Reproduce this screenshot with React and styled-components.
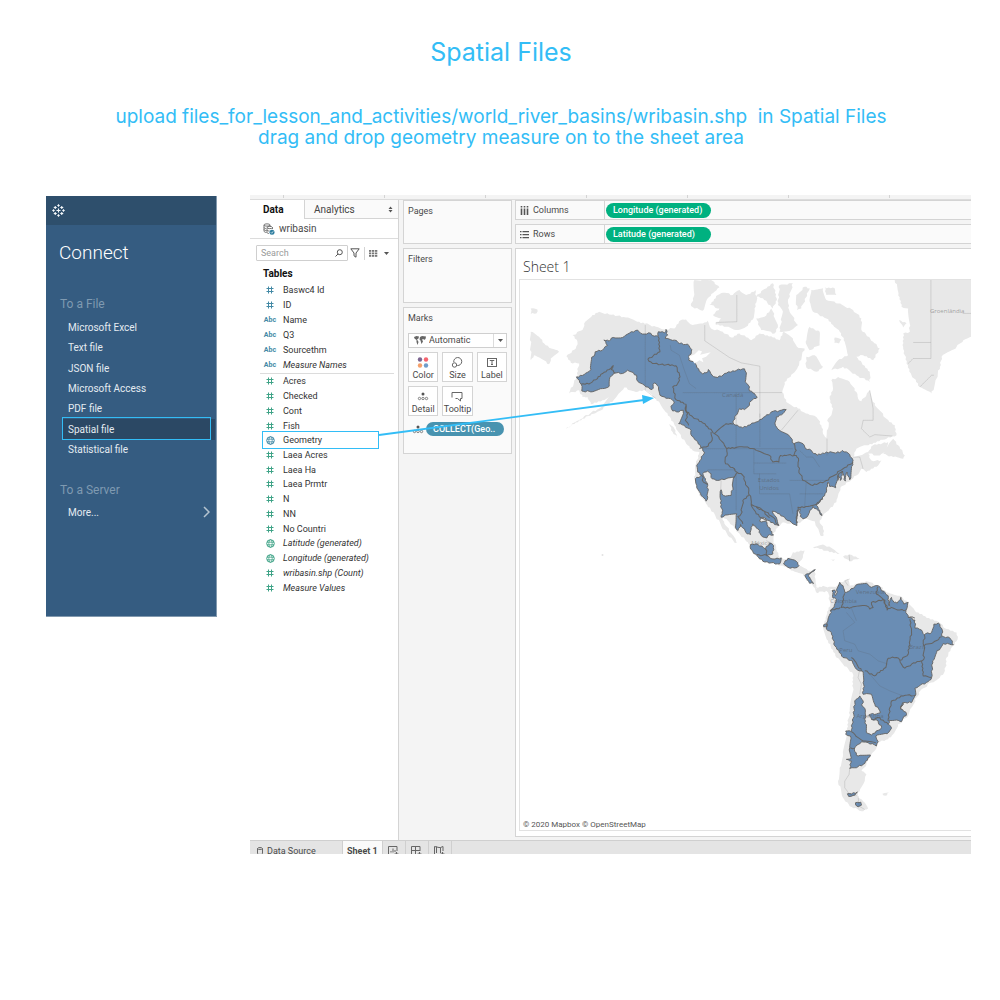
import React from "react";
import styled, { createGlobalStyle } from "styled-components";

const GlobalStyle = createGlobalStyle`
  * { box-sizing: border-box; }
  body { margin: 0; background: #fff; }
  h1, h2, h3, p, ul { margin: 0; padding: 0; }
  ul { list-style: none; }
  button, input, select { font: inherit; color: inherit; margin: 0; padding: 0; border: 0; background: none; border-radius: 0; }
  button { cursor: pointer; }
`;

/* ---------- lesson page ---------- */

const Page = styled.main`
  padding: 36px 29px 40px 46px;
  font-family: Roboto, "Liberation Sans", sans-serif;
`;
const Intro = styled.header`
  display: flex;
  flex-direction: column;
  gap: 38px;
  padding-right: 15px;
  text-align: center;
  font-family: Inter, "Open Sans", sans-serif;
  color: #33bdf6;
`;
const Title = styled.h1`
  font-size: 25px;
  line-height: 32px;
  font-weight: 400;
`;
const Steps = styled.p`
  font-size: 19px;
  line-height: 21px;
  white-space: pre-wrap;
`;
const Board = styled.div`
  display: flex;
  align-items: flex-start;
  gap: 33px;
  margin-top: 47px;
`;

/* ---------- connect panel ---------- */

const Connect = styled.nav`
  flex: 0 0 171px;
  min-height: 421px;
  background: #355c81;
  color: #e4ebf1;
  border-right: 1px solid #8299ae;
  border-bottom: 1px solid #8299ae;
  margin-top: 1px;
`;
const ConnectBar = styled.div`
  height: 29px;
  display: flex;
  align-items: center;
  padding-left: 6px;
  background: #2e4f6c;
`;
const ConnectTitle = styled.h2`
  padding: 16px 13px 0;
  font-size: 19px;
  line-height: 24px;
  font-weight: 300;
  color: #fff;
`;
const GroupTitle = styled.h3`
  padding: ${(p) => p.$space}px 14px 0;
  font-size: 12px;
  line-height: 16px;
  font-weight: 400;
  color: #7f9ab1;
`;
const FileList = styled.ul`
  display: grid;
  grid-auto-rows: 1fr;
  height: ${(p) => p.$height}px;
  margin-top: 5px;
  padding: 0 1px 0 17px;
`;
const FileItem = styled.li`
  position: relative;
  display: flex;
  background: ${(p) => (p.$on ? "#2b4864" : "none")};
`;
const FileLink = styled.a`
  flex: 1;
  display: flex;
  align-items: center;
  justify-content: space-between;
  padding: 0 5px;
  font-size: 10px;
  color: #e4ebf1;
  text-decoration: none;
`;
const Marker = styled.span`
  position: absolute;
  inset: -2px 4px 0 -1px;
  border: 1px solid #33bdf6;
  pointer-events: none;
`;

/* ---------- workbook ---------- */

const Workbook = styled.section`
  position: relative;
  flex: 1;
  min-width: 0;
  background: #f4f4f4;
  color: #4a4a4a;
  font-size: 9px;
`;
const Ticks = styled.div`
  display: flex;
  height: 4px;
  padding-left: 33px;
  gap: 100px;
`;
const Tick = styled.i`
  width: 1px;
  height: 3px;
  background: #d4d4d4;
`;
const Columns = styled.div`
  display: flex;
  min-height: 641px;
  border-top: 1px solid #dcdcdc;
`;
const DataPane = styled.aside`
  flex: 0 0 149px;
  min-width: 0;
  background: #fff;
  border-right: 1px solid #d4d4d4;
`;
const PaneTabs = styled.div`
  display: flex;
  height: 19px;
`;
const PaneTab = styled.button`
  flex: ${(p) => (p.$on ? "0 0 54px" : "1")};
  display: flex;
  align-items: center;
  justify-content: space-between;
  padding: 0 5px 0 ${(p) => (p.$on ? 13 : 9)}px;
  font-size: 10px;
  font-weight: ${(p) => (p.$on ? 700 : 400)};
  color: ${(p) => (p.$on ? "#111" : "#444")};
  ${(p) => !p.$on && "background:#fafafa; border-left:1px solid #d4d4d4; border-bottom:1px solid #d4d4d4;"}
`;
const Source = styled.div`
  display: flex;
  align-items: center;
  gap: 4px;
  height: 20px;
  padding-left: 13px;
  border-bottom: 1px solid #dcdcdc;
  font-size: 10px;
`;
const Tools = styled.div`
  display: flex;
  align-items: center;
  height: 16px;
  margin: 6px 8px 0 6px;
`;
const SearchBox = styled.label`
  flex: 0 0 92px;
  min-width: 0;
  display: flex;
  align-items: center;
  height: 16px;
  padding: 0 4px;
  border: 1px solid #cfcfcf;
  border-radius: 1px;
  margin-right: 2px;
`;
const SearchInput = styled.input`
  flex: 1;
  width: 100%;
  min-width: 0;
  outline: 0;
  &::placeholder { color: #9a9a9a; }
`;
const ToolButton = styled.button`
  display: flex;
  align-items: center;
  height: 14px;
  margin-right: ${(p) => p.$after}px;
`;
const Rule = styled.span`
  width: 1px;
  height: 13px;
  margin-right: 4px;
  background: #d4d4d4;
`;
const TablesTitle = styled.h3`
  padding: 5px 13px 0;
  font-size: 10px;
  line-height: 16px;
  color: #111;
`;
const Fields = styled.ul`
  display: grid;
  grid-auto-rows: 1fr;
  height: ${(p) => p.$height}px;
  margin: 0 4px 0 10px;
  & + & { border-top: 1px solid #dcdcdc; }
`;
const Field = styled.li`
  position: relative;
  display: grid;
  grid-template-columns: 20px 1fr;
  align-items: center;
  column-gap: 3px;
  font-style: ${(p) => (p.$italic ? "italic" : "normal")};
  color: #333;
  line-height: 12px;
`;
const FieldIcon = styled.span`
  display: flex;
  justify-content: center;
  font-size: 7px;
  font-weight: 700;
  font-style: normal;
  color: #4389a5;
`;
const FieldMarker = styled.span`
  position: absolute;
  inset: -2px 15px -1px 2px;
  border: 1px solid #33bdf6;
  pointer-events: none;
`;

const Cards = styled.div`
  flex: 0 0 117px;
  display: flex;
  flex-direction: column;
  gap: 4px;
  padding: 0 4px;
  margin-right: -1px;
`;
const Card = styled.section`
  min-height: ${(p) => p.$height}px;
  padding: 4px;
  background: #fafafa;
  border: 1px solid #d4d4d4;
`;
const CardTitle = styled.h3`
  font-size: 9px;
  line-height: 13px;
  font-weight: 400;
`;
const MarkType = styled.label`
  position: relative;
  display: flex;
  align-items: center;
  height: 15px;
  margin: 8px 0 4px;
  padding-left: 5px;
  background: #fff;
  border: 1px solid #cfcfcf;
`;
const MarkSelect = styled.select`
  appearance: none;
  flex: 1;
  min-width: 0;
  height: 13px;
  padding-left: 3px;
  line-height: 13px;
  outline: 0;
`;
const Chevron = styled.span`
  display: flex;
  align-items: center;
  justify-content: center;
  width: 13px;
  height: 13px;
  border-left: 1px solid #dcdcdc;
`;
const MarkGrid = styled.div`
  display: grid;
  grid-template-columns: repeat(3, 1fr);
  grid-auto-rows: 30px;
  gap: 4px;
`;
const MarkButton = styled.button`
  display: flex;
  flex-direction: column;
  align-items: center;
  justify-content: space-between;
  padding: 4px 0 0;
  background: #fff;
  border: 1px solid #d4d4d4;
  line-height: 11px;
`;
const PillRow = styled.div`
  display: flex;
  align-items: center;
  gap: 2px;
  padding: 6px 3px 0 4px;
`;
const Pill = styled.button`
  height: ${(p) => (p.$small ? 14 : 15)}px;
  width: ${(p) => (p.$small ? 78 : 105)}px;
  padding: 0 7px;
  border-radius: 8px;
  background: ${(p) => (p.$small ? "#4893b0" : "#00b180")};
  color: #fff;
  font-size: 9px;
  font-weight: 500;
  text-align: left;
  white-space: nowrap;
`;

const Sheet = styled.div`
  flex: 1;
  min-width: 0;
  display: flex;
  flex-direction: column;
  gap: 4px;
  padding-bottom: 3px;
`;
const Shelf = styled.div`
  display: flex;
  align-items: center;
  height: 20px;
  background: #fafafa;
  border: 1px solid #d4d4d4;
  border-right: 0;
`;
const ShelfName = styled.div`
  flex: 0 0 89px;
  display: flex;
  align-items: center;
  gap: 4px;
  height: 18px;
  padding-left: 4px;
  margin-right: 1px;
  border-right: 1px solid #d4d4d4;
`;
const View = styled.section`
  flex: 1;
  display: flex;
  flex-direction: column;
  padding: 6px 0 4px 3px;
  background: #fff;
  border: 1px solid #d4d4d4;
  border-right: 0;
`;
const ViewTitle = styled.h2`
  padding: 0 4px;
  font-family: "Open Sans", sans-serif;
  font-size: 14px;
  line-height: 24px;
  font-weight: 300;
  color: #333;
`;
const MapFrame = styled.figure`
  position: relative;
  display: flex;
  height: 552px;
  margin: 0;
  overflow: hidden;
  border: 1px solid #e2e2e2;
  border-right: 0;
`;
const Credit = styled.figcaption`
  position: absolute;
  left: 3px;
  bottom: 0;
  font-size: 8px;
  line-height: 11px;
  color: #555;
`;
const SheetTabs = styled.footer`
  display: flex;
  height: 14px;
  overflow: hidden;
  background: #e4e4e4;
  border-top: 1px solid #cfcfcf;
`;
const SheetTab = styled.button`
  flex: 0 0 ${(p) => p.$width}px;
  display: flex;
  align-items: center;
  gap: 4px;
  height: 20px;
  padding-left: ${(p) => p.$pad}px;
  border-right: 1px solid #cfcfcf;
  background: ${(p) => (p.$on ? "#fafafa" : "none")};
  font-weight: ${(p) => (p.$on ? 700 : 400)};
  white-space: nowrap;
`;
const Arrow = styled.svg`
  position: absolute;
  left: 128px;
  top: 196px;
  pointer-events: none;
`;

/* ---------- icons ---------- */

const plus = (x, y, r) => `M${x - r} ${y}H${x + r}M${x} ${y - r}V${y + r}`;
const Logo = () => (
  <svg width="13" height="13" viewBox="0 0 26 26" stroke="#f4f8fb" strokeWidth="2.200" fill="none" aria-hidden="true">
    <path d={[[13, 13, 4], [13, 3, 2.4], [13, 23, 2.4], [3, 13, 2.4], [23, 13, 2.4], [6.5, 7, 3], [19.5, 7, 3], [6.5, 19, 3], [19.5, 19, 3]].map((a) => plus(...a)).join("")} />
  </svg>
);
const Hash = ({ color }) => (
  <svg width="8" height="8" viewBox="0 0 8 8" stroke={color} fill="none" aria-hidden="true">
    <path d="M2.5 .5V7.5M5.5 .5V7.5M.5 2.5H7.5M.5 5.5H7.5" />
  </svg>
);
const Globe = ({ color }) => (
  <svg width="9" height="9" viewBox="0 0 9 9" stroke={color} fill="none" aria-hidden="true">
    <circle cx="4.5" cy="4.5" r="3.8" />
    <ellipse cx="4.5" cy="4.5" rx="1.7" ry="3.8" strokeWidth=".8" />
    <path d="M1 3.2H8M1 5.8H8" strokeWidth=".8" />
  </svg>
);
const Down = () => (
  <svg width="5" height="3" viewBox="0 0 5 3" aria-hidden="true"><path d="M0 0H5L2.5 3Z" fill="#555" /></svg>
);
const SourceIcon = () => (
  <svg width="12" height="12" viewBox="0 0 24 24" fill="none" stroke="#666" strokeWidth="1.8" aria-hidden="true">
    <path d="M2 4C2 1 14 1 14 4V7M2 4C2 7 14 7 14 4M2 4V16C2 18 5 19 7 19M2 9C2 10 4 11 6 11M2 13C3 15 5 15 7 15M8 9C8 6 19 6 19 9C19 12 8 12 8 9V19C8 20 10 21 12 21M19 9V12M8 14C9 16 11 16 13 16" />
    <circle cx="18" cy="18.500" r="5" fill="#2d7d9f" stroke="none" />
    <path d="M15.500 18.500L17.500 20.500L20.500 16.500" stroke="#fff" strokeWidth="1.300" />
  </svg>
);
const Magnifier = () => (
  <svg width="8" height="8" viewBox="0 0 8 8" fill="none" stroke="#555" aria-hidden="true">
    <circle cx="4.800" cy="3.200" r="2.500" /><path d="M3 5L.5 7.500" />
  </svg>
);
const Funnel = () => (
  <svg width="10" height="10" viewBox="0 0 10 10" fill="none" stroke="#555" aria-hidden="true">
    <path d="M.8 .8H9.200L6 5V9.200L4 7.800V5Z" />
  </svg>
);
const GridIcon = () => (
  <svg width="9" height="7" viewBox="0 0 9 7" fill="#777" aria-hidden="true">
    {[0, 3, 6].map((x) => [0, 2.5, 5].map((y) => <rect key={`${x}${y}`} x={x} y={y} width="2.300" height="1.800" />))}
  </svg>
);
const Sorter = () => (
  <svg width="5" height="7" viewBox="0 0 5 7" fill="#555" aria-hidden="true"><path d="M0.500 3L2.500 .5L4.500 3ZM0.500 4L2.500 6.500L4.500 4Z" /></svg>
);
const WorldIcon = () => (
  <svg width="12" height="9" viewBox="0 0 24 18" fill="#666" aria-hidden="true">
    <path d="M0 2L5 0L10 1L9 5L6 7L8 10L9 12L7 18L5 12L5 8L1 5ZM12 2L16 0L24 1L23 6L20 8L19 6L16 7L18 11L15 16L13 9L11 7Z" />
  </svg>
);
const Ring = ({ x, y }) => <circle cx={x} cy={y} r="1.200" fill="none" stroke="#666" strokeWidth=".8" />;
const markIcons = {
  Color: (
    <svg width="12" height="11" viewBox="0 0 12 11" aria-hidden="true">
      <circle cx="3" cy="2.500" r="2.200" fill="#7c6591" /><circle cx="9" cy="2.500" r="2.200" fill="#f5646f" />
      <circle cx="3" cy="8.500" r="2.200" fill="#f5a06b" /><circle cx="9" cy="8.500" r="2.200" fill="#6f9dcb" />
    </svg>
  ),
  Size: (
    <svg width="12" height="11" viewBox="0 0 12 11" fill="none" stroke="#666" aria-hidden="true">
      <path d="M2.800 5.200A4 4 0 1 1 6.300 8.500" /><circle cx="3.500" cy="8" r="2.200" />
    </svg>
  ),
  Label: (
    <svg width="12" height="11" viewBox="0 0 12 11" fill="none" stroke="#666" aria-hidden="true">
      <rect x="1.500" y="1.500" width="9" height="8" /><path d="M4 4V3.500H8V4M6 3.500V7.500M5 7.500H7" />
    </svg>
  ),
  Detail: (
    <svg width="12" height="11" viewBox="0 0 12 11" aria-hidden="true">
      <circle cx="6" cy="3" r="1.500" fill="#555" /><Ring x={2.5} y={7.5} /><Ring x={6} y={7.5} /><Ring x={9.5} y={7.5} />
    </svg>
  ),
  Tooltip: (
    <svg width="12" height="11" viewBox="0 0 12 11" fill="none" stroke="#666" aria-hidden="true">
      <path d="M1 6.500V1.500H11V7.500H9.500V10L6.500 7.500H4.500" />
    </svg>
  ),
};
const ColumnsIcon = () => (
  <svg width="9" height="9" viewBox="0 0 9 9" fill="#555" aria-hidden="true">
    {[0, 3, 6].map((x) => <path key={x} d={`M${x + 0.7} 0h1.600v1.500h-1.600zM${x + 0.7} 2.500h1.600v6.500h-1.600z`} />)}
  </svg>
);
const RowsIcon = () => (
  <svg width="9" height="9" viewBox="0 0 9 9" fill="#555" aria-hidden="true">
    {[1, 4, 7].map((y) => <path key={y} d={`M0 ${y}h1.500v1.300h-1.500zM2.500 ${y}h6.500v1.300h-6.500z`} />)}
  </svg>
);
const Cylinder = () => (
  <svg width="6" height="8" viewBox="0 0 6 8" fill="none" stroke="#666" aria-hidden="true">
    <path d="M.5 1.500V6.500C.5 7.800 5.500 7.800 5.500 6.500V1.500C5.500 .2 .5 .2 .5 1.500C.5 2.800 5.500 2.800 5.500 1.500" />
  </svg>
);
const newSheetPaths = [
  "M9 5V.5H.5V8.500H6M3 6.500V5M5 6.500V2.500M7 6V4",
  "M9 5V.5H.5V8.500H6M4.500 .5V8.500M.5 4.500H9",
  "M9 5V.5L6.500 1.500H5L.5 .5V8.500H2M2.500 .5V7M6.500 1.500V7",
];
const NewSheet = ({ d }) => (
  <svg width="11" height="10" viewBox="0 0 11 10" fill="none" stroke="#666" aria-hidden="true">
    <path d={d} /><path d="M6.500 8H10.500M8.500 6V10" strokeWidth="1.200" />
  </svg>
);

/* ---------- map ---------- */

// Turns a coarse trace into a coast-like outline: long edges are split and
// each new vertex is nudged sideways by a repeatable wobble.
function trace(text, closed = true, wobble = 2.6) {
  const pts = text.trim().split(/\s+/).map((p) => p.split(",").map(Number));
  const out = [];
  const last = closed ? pts.length : pts.length - 1;
  for (let i = 0; i < last; i++) {
    const [x1, y1] = pts[i];
    const [x2, y2] = pts[(i + 1) % pts.length];
    const len = Math.hypot(x2 - x1, y2 - y1);
    const n = Math.max(1, Math.round(len / 6));
    out.push(`${x1} ${y1}`);
    for (let k = 1; k < n; k++) {
      const s = Math.sin(x1 * 12.9 + y1 * 78.2 + k * 37.7) * 43758.5;
      const w = (s - Math.floor(s) - 0.5) * 2 * wobble;
      const t = k / n;
      out.push(`${(x1 + (x2 - x1) * t - ((y2 - y1) / len) * w).toFixed(1)} ${(y1 + (y2 - y1) * t + ((x2 - x1) / len) * w).toFixed(1)}`);
    }
  }
  if (!closed) out.push(pts[pts.length - 1].join(" "));
  return `M${out.join("L")}${closed ? "Z" : ""}`;
}

const north = {
  land: [
    "40,165 70,150 75,130 100,105 120,95 150,103 200,112 240,125 290,140 315,148 345,145 365,120 380,118 400,135 430,130 445,122 455,145 490,155 515,172 540,160 575,180 600,160 640,172 660,180 672,155 700,175 712,200 735,205 715,260 700,280 675,305 668,335 680,365 715,385 745,400 770,410 785,435 790,460 800,473 805,445 805,415 815,405 820,385 810,355 820,325 815,300 835,290 870,305 890,335 895,355 905,363 920,345 930,330 945,375 980,415 1005,435 1010,465 980,475 920,495 890,505 880,530 900,525 925,515 940,495 985,485 975,515 960,525 925,520 935,540 965,540 955,555 920,575 905,565 890,585 875,598 842,622 835,645 830,665 810,685 790,705 780,720 790,745 792,765 782,765 772,740 765,722 740,715 710,730 690,730 670,725 657,738 640,760 642,780 650,805 660,830 685,838 700,815 735,810 730,830 715,850 745,870 765,868 768,900 770,920 790,925 815,918 845,925 815,925 795,935 775,930 760,915 740,900 730,880 700,870 670,855 640,848 600,835 580,810 565,785 535,755 510,725 485,705 495,730 525,770 535,792 510,770 485,735 465,700 440,670 420,645 405,595 410,550 420,515 400,510 385,495 365,470 350,440 335,415 315,390 290,355 260,330 230,335 195,322 175,345 150,372 110,398 70,415 20,445 75,408 120,385 150,350 130,360 95,372 85,350 70,350 60,330 30,340 52,290 60,250 35,248 22,228 50,205 55,185",
    "-85,155 -60,170 -40,195 0,215 -25,235 -30,252 -65,230 -75,225 -85,240",
    "-85,85 -65,88 -68,100 -85,102",
    "405,0 455,0 480,22 465,35 445,55 430,92 395,78 403,50",
    "450,75 475,45 490,38 520,45 540,30 560,45 588,30 592,60 585,85 580,118 560,140 530,150 500,140 470,133 485,115 460,105 480,85",
    "610,30 640,10 652,60 640,85 610,55 590,50",
    "590,115 615,110 635,85 655,135 645,160 605,150",
    "660,15 700,10 685,65 690,95 715,135 695,150 660,155 670,95 655,75",
    "710,45 735,20 750,25 725,85 712,90",
    "755,30 790,25 800,60 835,70 880,90 905,115 905,150 940,185 960,205 940,240 910,225 890,230 930,275 930,305 890,285 850,260 815,270 835,240 865,225 855,185 840,155 820,135 800,115 760,95 750,65",
    "795,22 825,25 830,45 800,45",
    "750,140 780,155 780,195 750,210 738,185",
    "740,230 765,225 790,260 770,275 740,262",
    "825,172 845,178 838,190 824,188",
    "1005,-3 1240,-3 1240,170 1210,180 1190,200 1145,230 1140,260 1130,295 1115,340 1080,320 1055,285 1040,250 1030,200 1030,160 1050,155 1045,85 1025,80 1015,35",
    "1018,120 1040,130 1030,142",
    "970,520 985,495 1000,475 1015,495 1035,525 1030,535 1000,530",
    "760,800 790,792 820,805 840,818 810,815 775,802",
    "850,828 870,822 900,834 870,842",
    "812,835 826,837 820,841",
    "330,430 345,445 355,475 340,455",
  ],
  basins: [
    "52,290 75,283 95,268 97,238 108,215 130,210 145,196 134,180 150,183 162,172 190,172 205,162 235,150 250,162 268,158 285,168 297,168 297,155 315,158 320,148 325,165 318,175 345,180 360,190 385,192 397,208 395,222 388,228 388,240 408,243 412,262 430,282 440,278 447,268 458,285 475,292 495,280 520,272 555,266 560,285 557,305 570,320 570,332 585,340 593,350 575,362 565,380 555,388 540,385 530,405 520,425 523,432 550,443 565,435 590,425 618,408 635,395 660,391 680,388 670,400 650,410 646,428 660,450 690,468 703,490 717,485 730,490 738,505 755,510 772,525 800,515 840,517 848,510 865,518 880,540 875,565 870,598 862,575 857,602 848,572 842,600 835,585 828,622 810,618 805,605 800,635 780,665 768,672 775,680 787,705 770,685 760,678 750,690 745,705 730,715 722,708 722,685 712,700 710,720 712,735 700,730 685,720 675,710 650,695 638,692 650,710 658,735 645,732 630,720 610,710 600,722 622,725 632,750 642,763 625,765 622,772 605,765 595,745 580,730 575,740 573,762 563,760 555,745 543,732 535,750 530,745 532,700 510,702 485,710 488,695 482,650 485,628 492,645 515,645 520,620 523,590 500,595 475,600 458,595 455,580 445,572 430,580 438,595 445,615 445,650 440,662 425,645 412,615 408,595 428,585 415,575 412,555 422,540 435,515 430,505 410,480 398,468 395,450 375,435 358,430 370,405 372,390 358,395 340,392 335,378 345,365 333,355 315,350 302,345 298,320 285,308 278,328 255,315 235,303 232,285 205,270 190,280 165,278 152,292 150,318 130,325 95,335 68,332 66,312",
    "573,792 595,792 618,805 630,788 642,795 640,820 622,825 640,835 665,832 660,850 610,842 592,825 573,805",
    "672,850 685,833 710,842 718,855 705,862 685,860",
    "740,880 767,867 745,885 762,908 750,908 736,885",
  ],
  divides: [
    "66,312 95,308 115,295 130,280 150,268 162,256 156,268 168,280",
    "297,170 302,215 266,237 280,250 350,257 362,290 355,310 340,320 350,358 380,372 383,395 400,410 430,428 445,440 465,460 500,430 520,432",
    "380,372 378,390 385,400 378,420 388,435",
    "465,460 478,470 495,495 502,512 498,550 525,565 532,575 550,585 555,600 568,630 575,670 605,685 640,710 655,732",
    "455,455 458,480 440,500 420,505",
    "502,505 535,500 565,500 590,510 615,520 630,525 640,545 658,545 663,525 680,525 710,525 717,540 718,570 730,600 760,615 800,600 850,565 880,545",
    "703,490 710,510 702,525",
    "568,645 550,660 545,700 535,708 550,730",
    "575,670 590,700 622,722",
    "590,680 610,690 630,712",
    "710,728 715,680 745,678 770,672 790,655",
    "523,592 535,575",
    "428,585 432,605 445,612",
    "592,822 622,825 618,805",
    "835,600 835,585 850,572",
  ],
  borders: [
    "258,135 258,330 290,355", "436,135 436,182 510,232 545,248 601,258 601,412", "470,133 470,127 532,125 532,45",
    "370,337 667,337", "530,337 530,505", "601,400 601,500", "430,505 700,505", "665,450 715,390", "802,475 802,525",
    "930,330 940,385 940,420 910,420 905,445 930,470 945,463 998,467",
    "1113,-3 1113,235 1060,235 1045,250", "1060,187 1113,187", "1080,320 1115,285 1122,285", "1208,100 1240,100",
    "333,195 335,210 360,225 375,270 390,310 410,325", "445,568 530,568", "583,505 583,580 650,580", "583,548 680,548",
    "600,580 600,640 690,640", "690,640 700,700", "530,575 530,690", "720,640 790,640", "690,600 800,600", "740,600 735,680",
    "880,530 900,530 910,565", "868,822 870,842", "620,780 640,790", "483,645 485,600", "720,510 740,530 760,530 780,560",
  ],
};
const south = {
  land: [
    "40,75 50,85 70,75 95,90 120,65 145,55 150,75 200,62 235,75 260,95 300,105 325,125 345,150 370,165 410,180 440,205 470,215 473,235 455,260 440,290 435,330 420,350 395,365 365,385 350,410 335,440 320,470 295,490 280,520 265,535 235,545 230,562 215,580 200,610 185,630 200,640 195,660 180,690 170,705 190,720 205,742 185,750 150,735 130,710 115,660 120,620 130,580 140,520 150,450 160,380 160,340 110,290 85,240 70,195 80,165 92,130 85,95 70,85 52,98",
    "248,698 268,693 262,702 250,702",
    "238,74 250,82 246,90 236,82",
  ],
  basins: [
    "92,150 103,140 110,115 100,112 97,90 105,88 107,105 120,65 130,75 135,95 150,90 170,72 200,68 215,80 235,75 243,85 255,95 265,105 268,135 275,110 283,125 292,128 303,110 312,130 325,125 322,140 318,150 325,170 345,178 345,202 365,208 373,222 395,215 402,190 415,187 427,208 425,225 450,232 460,252 430,248 410,275 398,300 395,350 385,362 345,382 348,400 340,415 335,425 310,425 303,445 320,458 305,482 295,478 268,478 265,490 275,502 262,518 228,525 235,542 230,555 205,545 185,542 168,556 165,572 175,585 212,582 190,610 170,620 150,622 155,600 140,595 155,592 150,560 152,525 138,520 138,510 155,512 162,460 165,420 180,405 190,420 187,435 197,450 197,480 200,515 215,522 245,500 235,480 215,475 207,462 242,455 225,430 215,400 200,398 190,400 192,360 190,332 180,330 170,325 158,300 130,290 105,255 95,215 80,205 85,175 95,155",
    "143,698 173,693 160,703 147,706", "167,725 183,723 185,732 175,737 168,732", "72,192 82,190 82,198 72,198",
  ],
  divides: [
    "135,98 125,140 155,140 200,135 210,145 220,140 215,125 255,118 262,148 275,140 300,148 318,148",
    "92,150 122,140", "235,78 230,100 250,115 262,148",
    "330,175 335,210 330,240 325,280 300,298 290,290 265,292 258,320 225,345 195,330",
    "300,298 315,322 335,310 365,300 370,345 395,350", "373,222 372,255 372,295 367,300", "372,255 400,245 425,228",
    "155,290 165,300 185,330", "348,402 310,405 275,420 270,440 265,480", "303,445 308,425",
    "155,512 165,520 190,540 228,545", "215,475 240,470 265,490", "152,560 165,562", "325,170 345,172",
  ],
  borders: [
    "180,325 175,350 185,370 180,400", "150,622 148,640 135,660 135,680 150,700 175,705 178,735 195,745",
    "140,155 165,185 130,210 135,240 165,250 175,270", "175,270 210,280 235,300 265,310", "210,340 240,375 270,390 310,405",
    "145,75 135,60 150,55", "255,118 275,140", "155,142 170,180",
  ],
};
const mapLabels = [
  ["Groenlândia", 1227, 100], ["Canadá", 605, 350], ["Estados", 712, 606], ["Unidos", 716, 628], ["México", 692, 793],
];
const southLabels = [["Venezuela", 168, 100], ["Colombia", 92, 128], ["Peru", 119, 274], ["Brazil", 328, 266], ["Argentina", 170, 470]];

const Continent = ({ data, x, y }) => (
  <g transform={`translate(${x} ${y})`}>
    <path d={data.land.map((s) => trace(s)).join("")} fill="#e8e8e8" />
    <path d={data.basins.map((s) => trace(s)).join("")} fill="#6a8db4" stroke="#656565" strokeWidth="2.800" strokeLinejoin="round" />
    <path d={data.borders.map((s) => trace(s, false, 0)).join("")} fill="none" stroke="#555" strokeOpacity=".22" strokeWidth="2.400" />
    <path d={data.divides.map((s) => trace(s, false)).join("")} fill="none" stroke="#656565" strokeWidth="3" strokeLinejoin="round" />
  </g>
);
const WorldMap = () => (
  <svg width="100%" height="551" viewBox="0 0 1350 1653" preserveAspectRatio="xMinYMin slice" role="img" aria-label="River basins of the Americas">
    <Continent data={north} x={117} y={0} />
    <path d="M505 230l18 -8 12 -12 10 4 -6 10 32 -8 -14 14 -12 4 4 12 -12 -6 -14 10 -6 -8 -6 -4z" fill="#fff" />
    <Continent data={south} x={837} y={840} />
    <g fontSize="18" fill="#555" fillOpacity=".5" fontFamily="Open Sans, sans-serif">
      {mapLabels.map(([t, x, y]) => <text key={t} x={x} y={y}>{t}</text>)}
      {southLabels.map(([t, x, y]) => <text key={t} x={x + 837} y={y + 840}>{t}</text>)}
    </g>
    <circle cx="247" cy="823" r="3" fill="#e2e2e2" />
  </svg>
);

/* ---------- content ---------- */

const files = ["Microsoft Excel", "Text file", "JSON file", "Microsoft Access", "PDF file", "Spatial file", "Statistical file"];
const BLUE = "#4389a5";
const GREEN = "#3fa387";
const dimensions = [["Baswc4 Id", "#"], ["ID", "#"], ["Name", "Abc"], ["Q3", "Abc"], ["Sourcethm", "Abc"], ["Measure Names", "Abc", true]];
const measures = [
  ["Acres", "#"], ["Checked", "#"], ["Cont", "#"], ["Fish", "#"], ["Geometry", "geo"], ["Laea Acres", "#"], ["Laea Ha", "#"],
  ["Laea Prmtr", "#"], ["N", "#"], ["NN", "#"], ["No Countri", "#"], ["Latitude (generated)", "geo", true],
  ["Longitude (generated)", "geo", true], ["wribasin.shp (Count)", "#", true], ["Measure Values", "#", true],
];
const fieldList = (rows, height, color) => (
  <Fields $height={height}>
    {rows.map(([name, kind, italic]) => (
      <Field key={name} $italic={italic}>
        <FieldIcon>
          {kind === "#" ? <Hash color={color} /> : kind === "geo" ? <Globe color={name === "Geometry" ? BLUE : color} /> : kind}
        </FieldIcon>
        {name}
        {name === "Geometry" && <FieldMarker />}
      </Field>
    ))}
  </Fields>
);

export default function App() {
  return (
    <Page>
      <GlobalStyle />
      <Intro>
        <Title>Spatial Files</Title>
        <Steps>
          {"upload files_for_lesson_and_activities/world_river_basins/wribasin.shp  in Spatial Files"}
          <br />
          drag and drop geometry measure on to the sheet area
        </Steps>
      </Intro>
      <Board>
        <Connect>
          <ConnectBar><Logo /></ConnectBar>
          <ConnectTitle>Connect</ConnectTitle>
          <GroupTitle $space={31}>To a File</GroupTitle>
          <FileList $height={143}>
            {files.map((f) => (
              <FileItem key={f} $on={f === "Spatial file"}>
                <FileLink href="#">{f}</FileLink>
                {f === "Spatial file" && <Marker />}
              </FileItem>
            ))}
          </FileList>
          <GroupTitle $space={22}>To a Server</GroupTitle>
          <FileList $height={18}>
            <FileItem>
              <FileLink href="#">
                More...
                <svg width="7" height="12" viewBox="0 0 7 12" fill="none" stroke="#b5c4d1" strokeWidth="1.500" aria-hidden="true"><path d="M1 1L6 6L1 11" /></svg>
              </FileLink>
            </FileItem>
          </FileList>
        </Connect>

        <Workbook>
          <Ticks>{[1, 2, 3, 4, 5, 6, 7].map((n) => <Tick key={n} />)}</Ticks>
          <Columns>
            <DataPane>
              <PaneTabs>
                <PaneTab $on>Data</PaneTab>
                <PaneTab>Analytics<Sorter /></PaneTab>
              </PaneTabs>
              <Source><SourceIcon />wribasin</Source>
              <Tools>
                <SearchBox>
                  <SearchInput placeholder="Search" aria-label="Search fields" />
                  <Magnifier />
                </SearchBox>
                <ToolButton $after={4} aria-label="Filter fields"><Funnel /></ToolButton>
                <Rule />
                <ToolButton $after={6} aria-label="Group fields"><GridIcon /></ToolButton>
                <ToolButton $after={0} aria-label="View options"><Down /></ToolButton>
              </Tools>
              <TablesTitle>Tables</TablesTitle>
              {fieldList(dimensions, 91, BLUE)}
              {fieldList(measures, 222, GREEN)}
            </DataPane>

            <Cards>
              <Card $height={44}><CardTitle>Pages</CardTitle></Card>
              <Card $height={55}><CardTitle>Filters</CardTitle></Card>
              <Card $height={147}>
                <CardTitle>Marks</CardTitle>
                <MarkType>
                  <WorldIcon />
                  <MarkSelect aria-label="Mark type"><option>Automatic</option></MarkSelect>
                  <Chevron><Down /></Chevron>
                </MarkType>
                <MarkGrid>
                  {Object.keys(markIcons).map((m) => <MarkButton key={m}>{markIcons[m]}{m}</MarkButton>)}
                </MarkGrid>
                <PillRow>{markIcons.Detail}<Pill $small>COLLECT(Geo..</Pill></PillRow>
              </Card>
            </Cards>

            <Sheet>
              <Shelf><ShelfName><ColumnsIcon />Columns</ShelfName><Pill>Longitude (generated)</Pill></Shelf>
              <Shelf><ShelfName><RowsIcon />Rows</ShelfName><Pill>Latitude (generated)</Pill></Shelf>
              <View>
                <ViewTitle>Sheet 1</ViewTitle>
                <MapFrame>
                  <WorldMap />
                  <Credit>© 2020 Mapbox © OpenStreetMap</Credit>
                </MapFrame>
              </View>
            </Sheet>
          </Columns>
          <SheetTabs>
            <SheetTab $width={93} $pad={7}><Cylinder />Data Source</SheetTab>
            <SheetTab $width={40} $pad={4} $on>Sheet 1</SheetTab>
            {newSheetPaths.map((d, i) => (
              <SheetTab key={d} $width={23} $pad={5} aria-label={["New worksheet", "New dashboard", "New story"][i]}><NewSheet d={d} /></SheetTab>
            ))}
          </SheetTabs>
          <Arrow width="280" height="48" viewBox="0 0 280 48" aria-hidden="true">
            <path d="M1 44L266 9" stroke="#33bdf6" strokeWidth="1.800" />
            <path d="M264 4L276 7L265 13Z" fill="#33bdf6" />
          </Arrow>
        </Workbook>
      </Board>
    </Page>
  );
}
